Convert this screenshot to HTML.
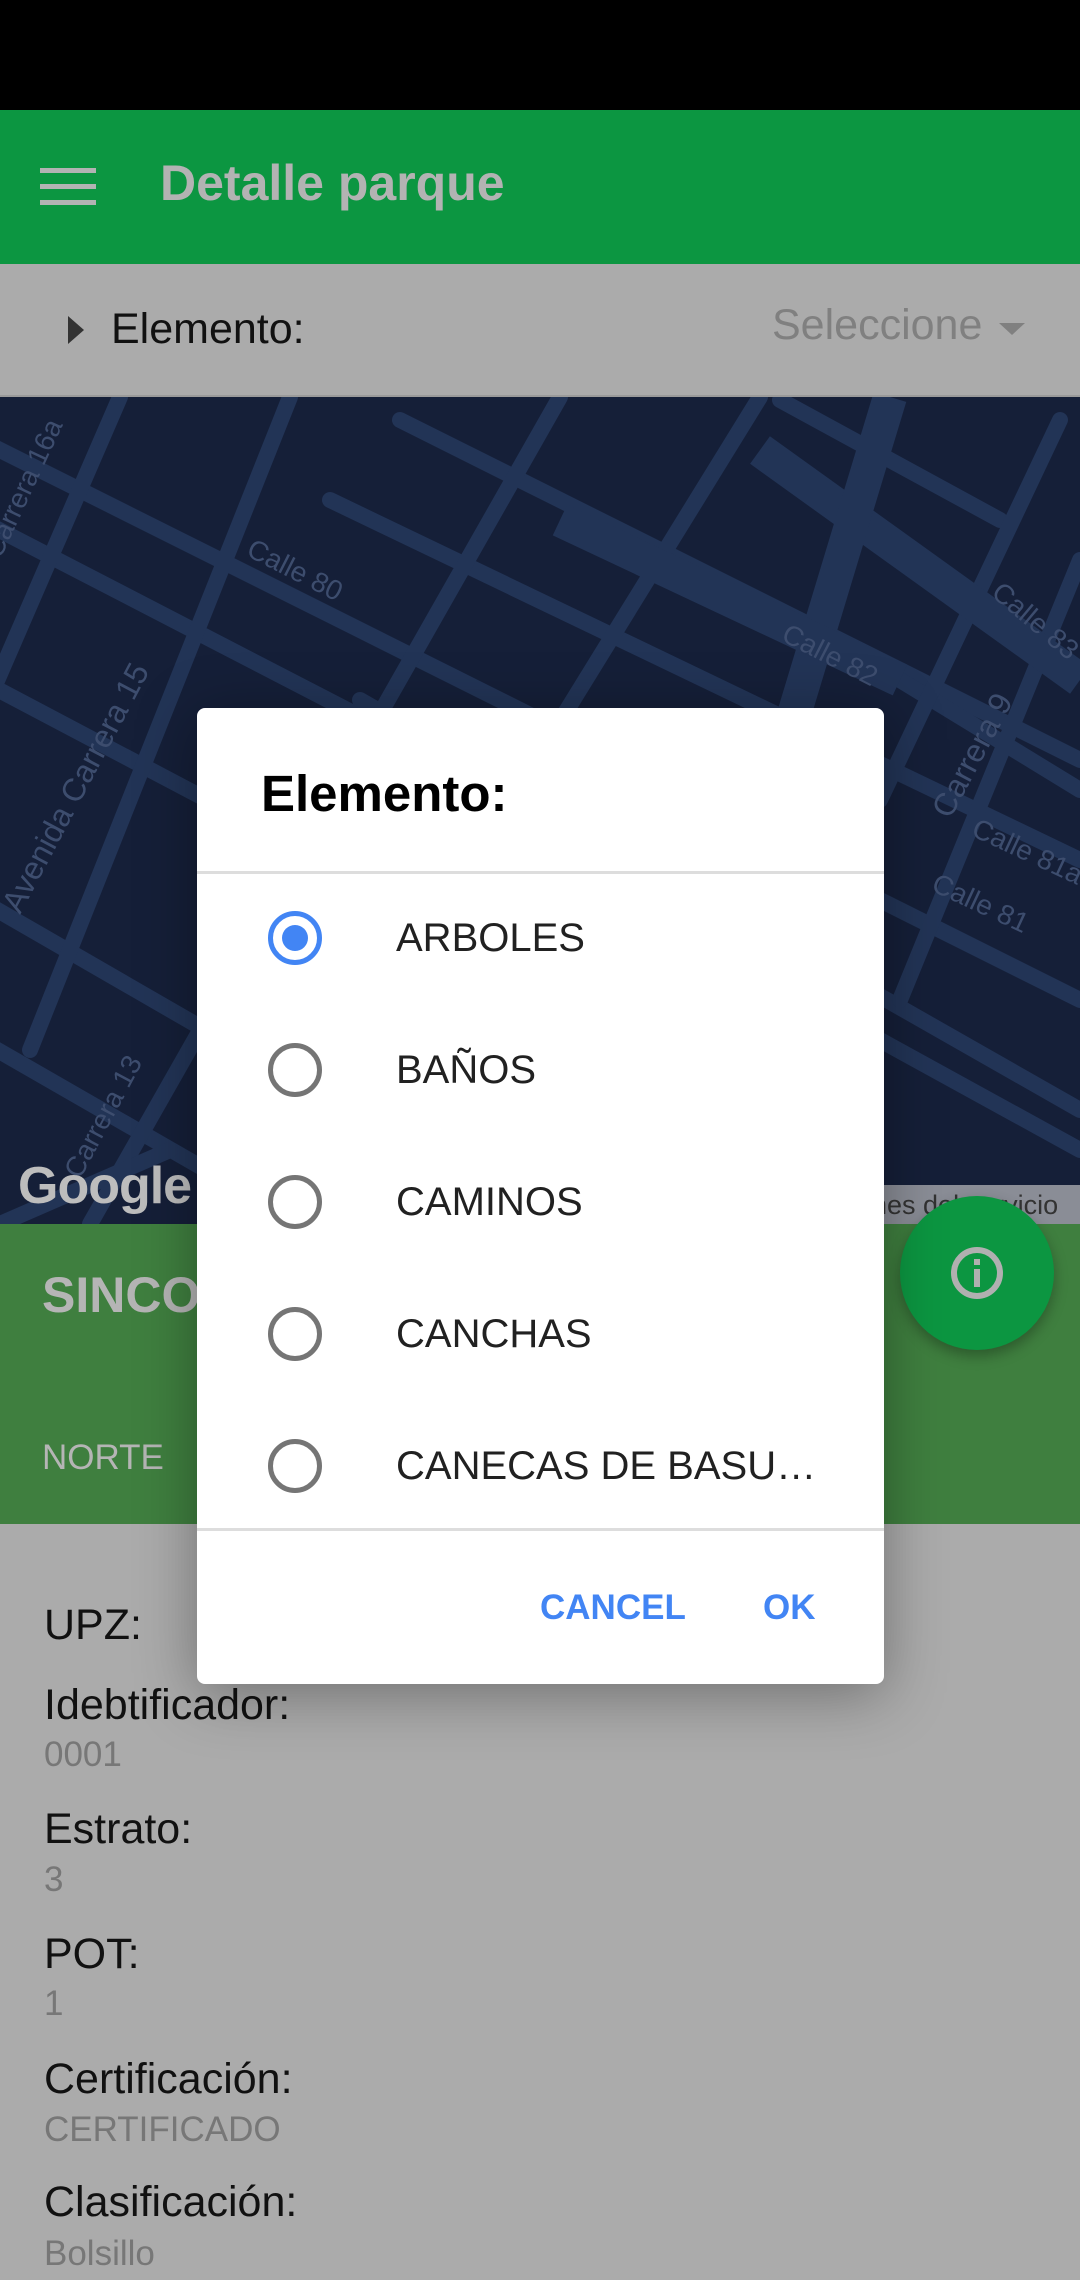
<!DOCTYPE html>
<html><head><meta charset="utf-8">
<style>
*{margin:0;padding:0;box-sizing:border-box}
body{width:1080px;height:2280px;position:relative;overflow:hidden;background:#ababab;font-family:"Liberation Sans",Roboto,sans-serif}
.abs{position:absolute}
.status{left:0;top:0;width:1080px;height:110px;background:#000}
.bar{left:0;top:110px;width:1080px;height:154px;background:#0c9641}
.title{left:160px;top:154px;font-size:50px;color:#b3b3b3;font-weight:bold}
.sel{left:0;top:264px;width:1080px;height:133px;background:#ababab;border-bottom:2px solid #9a9a9a}
.map{left:0;top:397px;width:1080px;height:827px;background:#151f38;overflow:hidden}
.green{left:0;top:1224px;width:1080px;height:300px;background:#3f7f3f}
.lab{left:44px;font-size:43px;color:#111}
.val{left:44px;font-size:35px;color:#777}
.dlg{left:197px;top:708px;width:687px;height:976px;background:#fff;border-radius:8px;box-shadow:0 10px 60px rgba(0,0,0,.35)}
.item{position:absolute;left:199px;font-size:40px;color:#212121}
.radio{position:absolute;left:71px;width:54px;height:54px;border:5px solid #757575;border-radius:50%}
.btn{position:absolute;font-size:35px;color:#4285f4;font-weight:bold;top:880px}
</style></head><body>
<div class="abs status"></div>
<div class="abs bar">
  <div class="abs" style="left:40px;top:58px;width:56px;height:5px;background:#b3b3b3"></div>
  <div class="abs" style="left:40px;top:74px;width:56px;height:5px;background:#b3b3b3"></div>
  <div class="abs" style="left:40px;top:90px;width:56px;height:5px;background:#b3b3b3"></div>
</div>
<div class="abs title">Detalle parque</div>
<div class="abs sel">
  <div class="abs" style="left:68px;top:52px;width:0;height:0;border-top:14px solid transparent;border-bottom:14px solid transparent;border-left:16px solid #333"></div>
  <div class="abs" style="left:111px;top:41px;font-size:43px;color:#111">Elemento:</div>
  <div class="abs" style="left:772px;top:37px;font-size:43px;color:#808080">Seleccione</div>
  <div class="abs" style="left:999px;top:59px;width:0;height:0;border-left:13px solid transparent;border-right:13px solid transparent;border-top:12px solid #808080"></div>
</div>
<div class="abs map">
<svg width="1080" height="827" viewBox="0 397 1080 827">
<g stroke="#223456" stroke-width="16" fill="none" stroke-linecap="round">
<line x1="-20" y1="440" x2="620" y2="760"/>
<line x1="-20" y1="520" x2="560" y2="820"/>
<line x1="-20" y1="680" x2="700" y2="1060"/>
<line x1="330" y1="500" x2="1080" y2="860"/>
<line x1="400" y1="420" x2="1080" y2="760"/>
<line x1="360" y1="700" x2="1080" y2="1110"/>
<line x1="-20" y1="900" x2="500" y2="1200"/>
<line x1="-20" y1="1040" x2="300" y2="1224"/>
<line x1="880" y1="900" x2="1080" y2="1000"/>
<line x1="880" y1="1040" x2="1080" y2="1150"/>
<line x1="900" y1="680" x2="1080" y2="790"/>
<line x1="780" y1="400" x2="1000" y2="520"/>
<line x1="120" y1="397" x2="-20" y2="720"/>
<line x1="290" y1="397" x2="30" y2="1050"/>
<line x1="560" y1="397" x2="90" y2="1224"/>
<line x1="760" y1="397" x2="250" y2="1224"/>
<line x1="420" y1="720" x2="270" y2="1000"/>
<line x1="1060" y1="420" x2="880" y2="800"/>
<line x1="1080" y1="560" x2="900" y2="1000"/>
<line x1="170" y1="1150" x2="0" y2="1224"/>
</g>
<g stroke="#223456" stroke-width="34" fill="none">
<line x1="760" y1="450" x2="1080" y2="680"/>
<line x1="890" y1="397" x2="640" y2="1224"/>
<line x1="560" y1="520" x2="900" y2="680"/>
</g>
<g fill="#3d4d6e" font-size="28">
<text x="245" y="555" transform="rotate(27 245 555)">Calle 80</text>
<text x="780" y="640" transform="rotate(27 780 640)">Calle 82</text>
<text x="990" y="595" transform="rotate(40 990 595)">Calle 83</text>
<text x="970" y="835" transform="rotate(25 970 835)">Calle 81a</text>
<text x="930" y="890" transform="rotate(25 930 890)">Calle 81</text>
<text x="20" y="915" transform="rotate(-62 20 915)" font-size="32">Avenida Carrera 15</text>
<text x="80" y="1180" transform="rotate(-62 80 1180)">Carrera 13</text>
<text x="950" y="820" transform="rotate(-62 950 820)" font-size="32">Carrera 9</text>
<text x="0" y="560" transform="rotate(-65 0 560)">Carrera 16a</text>
</g>
<text x="18" y="1203" font-size="52" font-weight="bold" fill="#bdbdbd" letter-spacing="-1">Google</text>
<rect x="884" y="1185" width="196" height="39" fill="#8a8d96"/>
<text x="872" y="1214" font-size="27" fill="#333">nes del servicio</text>
</svg>
</div>
<div class="abs green">
  <div class="abs" style="left:42px;top:42px;font-size:50px;font-weight:bold;color:#b5b5b5">SINCO</div>
  <div class="abs" style="left:42px;top:214px;font-size:35px;color:#b5b5b5">NORTE</div>
</div>
<div class="abs" style="left:900px;top:1196px;width:154px;height:154px;border-radius:50%;background:#0c9641;box-shadow:0 6px 14px rgba(0,0,0,.3)">
  <svg width="154" height="154" viewBox="0 0 154 154"><circle cx="77" cy="77" r="23" fill="none" stroke="#b0b0b0" stroke-width="6"/><rect x="74" y="73" width="6" height="18" fill="#b0b0b0"/><rect x="74" y="63" width="6" height="6" fill="#b0b0b0"/></svg>
</div>
<div class="abs lab" style="top:1601px">UPZ:</div>
<div class="abs lab" style="top:1681px">Idebtificador:</div>
<div class="abs val" style="top:1735px">0001</div>
<div class="abs lab" style="top:1805px">Estrato:</div>
<div class="abs val" style="top:1860px">3</div>
<div class="abs lab" style="top:1930px">POT:</div>
<div class="abs val" style="top:1984px">1</div>
<div class="abs lab" style="top:2055px">Certificación:</div>
<div class="abs val" style="top:2110px">CERTIFICADO</div>
<div class="abs lab" style="top:2178px">Clasificación:</div>
<div class="abs val" style="top:2234px">Bolsillo</div>

<div class="abs dlg">
  <div class="abs" style="left:64px;top:56px;font-size:51px;font-weight:bold;color:#000">Elemento:</div>
  <div class="abs" style="left:0;top:163px;width:687px;height:3px;background:#ddd"></div>
  <div class="radio" style="top:203px;border-color:#4285f4"><div style="position:absolute;left:9px;top:9px;width:26px;height:26px;border-radius:50%;background:#4285f4"></div></div>
  <div class="item" style="top:208px">ARBOLES</div>
  <div class="radio" style="top:335px"></div>
  <div class="item" style="top:340px">BAÑOS</div>
  <div class="radio" style="top:467px"></div>
  <div class="item" style="top:472px">CAMINOS</div>
  <div class="radio" style="top:599px"></div>
  <div class="item" style="top:604px">CANCHAS</div>
  <div class="radio" style="top:731px"></div>
  <div class="item" style="top:736px">CANECAS DE BASU…</div>
  <div class="abs" style="left:0;top:820px;width:687px;height:3px;background:#ddd"></div>
  <div class="btn" style="left:343px">CANCEL</div>
  <div class="btn" style="left:566px">OK</div>
</div>
</body></html>
